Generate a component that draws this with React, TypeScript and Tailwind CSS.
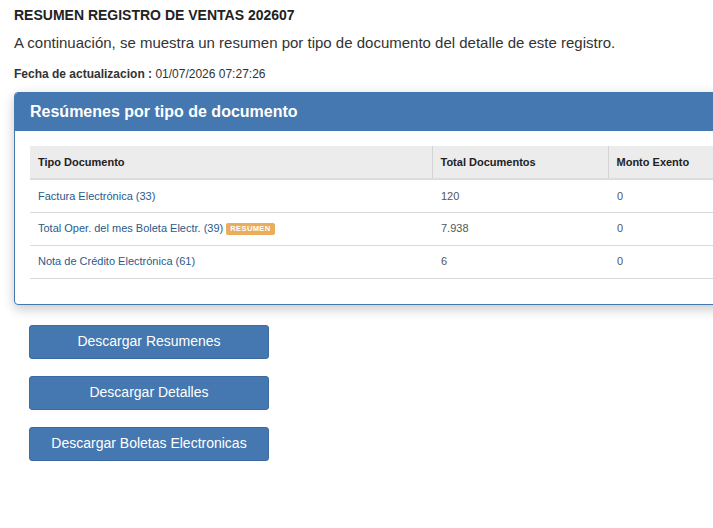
import React from "react";

const rows = [
  { tipo: "Factura Electrónica (33)", total: "120", exento: "0", badge: false },
  { tipo: "Total Oper. del mes Boleta Electr. (39)", total: "7.938", exento: "0", badge: true },
  { tipo: "Nota de Crédito Electrónica (61)", total: "6", exento: "0", badge: false },
];

export default function App() {
  return (
    <div
      className="w-[713px] h-[528px] overflow-hidden bg-white text-[#333]"
      style={{ fontFamily: "Arial, 'Liberation Sans', Helvetica, sans-serif" }}
    >
      <div className="pl-[14px] pt-[7px]">
        <h1 className="text-[14px] font-bold leading-[17px] text-[#222]">
          RESUMEN REGISTRO DE VENTAS 202607
        </h1>
        <p className="mt-[9px] text-[15px] leading-[19px] text-[#333]">
          A continuación, se muestra un resumen por tipo de documento del detalle de este registro.
        </p>
        <p className="mt-[15px] text-[12px] leading-[14px] text-[#333]">
          <span className="font-bold">Fecha de actualizacion :</span> 01/07/2026 07:27:26
        </p>

        <div className="mt-[11px] w-[900px] rounded-[4px] border border-[#4577b0] bg-white shadow-[0_4px_12px_rgba(0,0,0,0.22)]">
          <div className="flex h-[38px] items-center rounded-t-[3px] bg-[#4577b0] pl-[15px]">
            <h2 className="text-[16px] font-bold text-white">Resúmenes por tipo de documento</h2>
          </div>
          <div className="px-[15px] pt-[15px] pb-[25px]">
            <table className="w-full border-collapse text-[11px]">
              <thead>
                <tr className="h-[33px] border-b-2 border-[#dcdcdc] bg-[#ececec] text-left text-[#222]">
                  <th className="w-[402px] pl-[8px] font-bold">Tipo Documento</th>
                  <th className="w-[176px] border-l border-[#d4d4d4] pl-[8px] font-bold">Total Documentos</th>
                  <th className="border-l border-[#d4d4d4] pl-[8px] font-bold">Monto Exento</th>
                </tr>
              </thead>
              <tbody>
                {rows.map((r) => (
                  <tr key={r.tipo} className="h-[33px] border-b border-[#dadada]">
                    <td className="pl-[8px] text-[#2a5a8c]">
                      <span className="inline-flex items-center">
                        {r.tipo}
                        {r.badge && (
                          <span className="ml-[3px] inline-flex h-[12px] items-center rounded-[2px] bg-[#e9ad5b] px-[4px] text-[7.5px] font-bold tracking-[0.4px] text-white">
                            RESUMEN
                          </span>
                        )}
                      </span>
                    </td>
                    <td className="pl-[9px] text-[#555]">{r.total}</td>
                    <td className="pl-[9px] text-[#555]">{r.exento}</td>
                  </tr>
                ))}
              </tbody>
            </table>
          </div>
        </div>

        <div className="mt-[20px] flex flex-col gap-[17px] pl-[15px]">
          {["Descargar Resumenes", "Descargar Detalles", "Descargar Boletas Electronicas"].map((t) => (
            <button
              key={t}
              className="h-[34px] w-[240px] rounded-[3px] border border-[#3d6ba0] bg-[#4577b0] text-[14px] text-white"
            >
              {t}
            </button>
          ))}
        </div>
      </div>
    </div>
  );
}
